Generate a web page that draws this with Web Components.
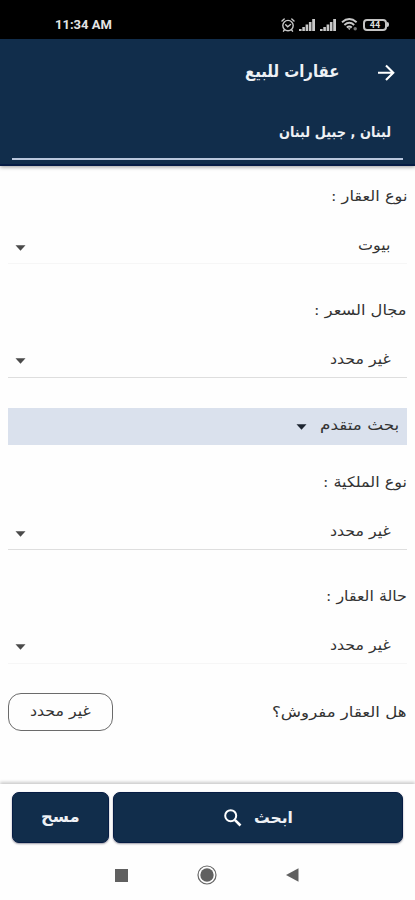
<!DOCTYPE html>
<html lang="ar" dir="rtl">
<head>
<meta charset="utf-8">
<meta name="viewport" content="width=device-width, initial-scale=1">
<title>عقارات للبيع</title>
<style>
  html, body {
    margin: 0;
    height: 100%;
    overflow: hidden;
    background: #fefefe;
    font-family: "DejaVu Sans", "Noto Sans", sans-serif;
  }
</style>
</head>
<body>
<search-screen></search-screen>

<script>
// Text set to a given width, whatever the metrics of the font
class FitText extends HTMLElement {
  constructor() {
    super();
    this.attachShadow({ mode: 'open' });
  }

  connectedCallback() {
    const width = Number(this.getAttribute('width'));
    this.shadowRoot.innerHTML = `
      <style>
        :host {
          display: block;
          flex: none;
          width: ${width}px;
          white-space: nowrap;
          line-height: 30px;
          height: 30px;
        }
        span {
          display: inline-block;
          transform-origin: right center;
        }
        :host([dir="ltr"]) span {
          transform-origin: left center;
        }
      </style>
      <span><slot></slot></span>
    `;
    const span = this.shadowRoot.querySelector('span');
    span.style.transform = `scaleX(${width / span.offsetWidth})`;
  }
}

class StatusBar extends HTMLElement {
  constructor() {
    super();
    this.attachShadow({ mode: 'open' });
  }

  connectedCallback() {
    const signal = `
      <svg width="17" height="12" viewBox="0 0 17 12" fill="#c8c8c8">
        <rect x="0" y="10" width="2.6" height="2"/>
        <rect x="3.3" y="8" width="2.6" height="4"/>
        <rect x="6.6" y="5.5" width="2.6" height="6.5"/>
        <rect x="9.9" y="3" width="2.6" height="9"/>
        <rect x="13.2" y="0" width="2.8" height="12"/>
      </svg>`;
    this.shadowRoot.innerHTML = `
      <style>
        :host {
          display: flex;
          direction: ltr;
          align-items: center;
          justify-content: space-between;
          height: 39px;
          padding: 10px 26px 0 55px;
          box-sizing: border-box;
          background: #000;
          color: #e4e4e4;
        }
        fit-text {
          font: bold 13px/30px Roboto, sans-serif;
        }
        .icons {
          display: flex;
          align-items: center;
          gap: 4px;
        }
        svg {
          display: block;
        }
        .battery {
          display: flex;
          align-items: center;
          margin-left: 1px;
        }
        .cell {
          width: 24px;
          height: 12px;
          box-sizing: border-box;
          border: 2px solid #c4c4c4;
          border-radius: 4px;
          color: #ddd;
          font: bold 9px/8px Roboto, sans-serif;
          text-align: center;
        }
        .tip {
          width: 2px;
          height: 5px;
          border-radius: 0 2px 2px 0;
          background: #ccc;
        }
      </style>
      <fit-text dir="ltr" width="57">11:34 AM</fit-text>
      <div class="icons">
        <svg width="14" height="14" viewBox="0 0 14 14" fill="none" stroke="#c8c8c8" stroke-width="1.4" stroke-linecap="round">
          <circle cx="7" cy="7.6" r="5.2"/>
          <path d="M1 3 3.2 1M13 3 10.8 1M4.7 6.8 6.7 8.8 9.5 6.5M3.3 12 2.5 13.2M10.7 12l.8 1.2"/>
        </svg>
        ${signal}
        ${signal}
        <svg width="17" height="13" viewBox="0 0 17 13" fill="none" stroke="#c8c8c8" stroke-width="1.9">
          <path d="M1 4.2Q8.3-2 15.6 4.2M3.4 6.9Q8.3 2.8 13.2 6.9M5.8 9.4Q8.3 7.4 10.8 9.4"/>
          <path d="M6.8 10.2 8.3 12l1.5-1.8z" fill="#c8c8c8" stroke="none"/>
          <circle cx="14.2" cy="10.8" r="1.7" fill="#777" stroke="none"/>
        </svg>
        <div class="battery"><div class="cell">44</div><div class="tip"></div></div>
      </div>
    `;
  }
}

class PageHeader extends HTMLElement {
  constructor() {
    super();
    this.attachShadow({ mode: 'open' });
  }

  connectedCallback() {
    this.shadowRoot.innerHTML = `
      <style>
        :host {
          display: block;
          height: 127px;
          box-sizing: border-box;
          background: #112d4b;
          border-bottom: 2px solid #061c44;
          box-shadow: 0 1px 4px rgba(0, 0, 0, 0.4);
          color: #eef1f5;
          font-weight: bold;
        }
        .bar {
          display: flex;
          align-items: center;
          gap: 38px;
          height: 66px;
          padding-right: 20px;
          font-size: 16.5px;
        }
        .place {
          display: flex;
          align-items: center;
          height: 55px;
          padding: 1px 12px 0 0;
          margin: 0 12px;
          box-sizing: border-box;
          border-bottom: 2px solid #b9c6dc;
          font-size: 14.5px;
        }
      </style>
      <div class="bar">
        <svg width="18" height="18" viewBox="0 0 18 18" fill="none" stroke="#fff" stroke-width="2.1">
          <path d="M1 9.8h15M9 2.5l7.3 7.3L9 17.1"/>
        </svg>
        <slot name="title"></slot>
      </div>
      <div class="place"><slot name="place"></slot></div>
    `;
  }
}

class SelectField extends HTMLElement {
  constructor() {
    super();
    this.attachShadow({ mode: 'open' });
  }

  connectedCallback() {
    this.shadowRoot.innerHTML = `
      <style>
        :host {
          display: block;
          height: 85.5px;
          color: #333;
          font-size: 14.5px;
        }
        .label {
          display: flex;
          align-items: center;
          height: 34px;
        }
        .value {
          display: flex;
          align-items: center;
          justify-content: space-between;
          height: 51px;
          padding: 14px 16px 0 7px;
          box-sizing: border-box;
          border-bottom: 1px solid var(--line, #dedede);
        }
        svg {
          margin-top: 5px;
        }
      </style>
      <div class="label"><slot name="label"></slot></div>
      <div class="value">
        <slot></slot>
        <svg width="11" height="6" viewBox="0 0 11 6"><path d="M.5.3h10L5.5 5.7z" fill="#4a4a4a"/></svg>
      </div>
    `;
  }
}

class NavyButton extends HTMLElement {
  constructor() {
    super();
    this.attachShadow({ mode: 'open' });
  }

  connectedCallback() {
    this.shadowRoot.innerHTML = `
      <style>
        :host {
          display: flex;
          align-items: center;
          justify-content: center;
          gap: 12px;
          height: 51px;
          box-sizing: border-box;
          border: 1px solid #061c44;
          border-radius: 7px;
          background: #112d4b;
          box-shadow: 0 1px 2px rgba(0, 0, 30, 0.4);
          color: #eef1f5;
          font-size: 16px;
          font-weight: bold;
        }
      </style>
      <slot></slot>
    `;
  }
}

class SystemNav extends HTMLElement {
  constructor() {
    super();
    this.attachShadow({ mode: 'open' });
  }

  connectedCallback() {
    this.shadowRoot.innerHTML = `
      <style>
        :host {
          display: flex;
          direction: ltr;
          align-items: center;
          justify-content: space-between;
          height: 50px;
          padding: 0 116px 0 115px;
        }
      </style>
      <svg width="13" height="13"><rect width="13" height="13" fill="#606060"/></svg>
      <svg width="20" height="20" viewBox="0 0 20 20">
        <circle cx="10" cy="10" r="9" fill="none" stroke="#666" stroke-width="1.2"/>
        <circle cx="10" cy="10" r="6.7" fill="#606060"/>
      </svg>
      <svg width="13" height="14"><path d="M0 7 12.5.3v13.4z" fill="#606060"/></svg>
    `;
  }
}

class SearchScreen extends HTMLElement {
  constructor() {
    super();
    this.attachShadow({ mode: 'open' });
  }

  connectedCallback() {
    this.shadowRoot.innerHTML = `
      <style>
        :host {
          display: flex;
          flex-direction: column;
          height: 900px;
        }
        main {
          flex: 1;
          padding: 13px 8px 0;
          color: #333;
          font-size: 14.5px;
        }
        select-field + select-field {
          margin-top: 28px;
        }
        .faint {
          --line: #f6f6f6;
        }
        .advanced {
          display: flex;
          align-items: center;
          gap: 13px;
          height: 37px;
          margin: 30px 0 20px;
          padding: 0 8px 4px 0;
          box-sizing: border-box;
          background: #dae1ed;
        }
        .advanced svg {
          margin-top: 4px;
        }
        .furnished {
          display: flex;
          align-items: center;
          justify-content: space-between;
          margin-top: 29px;
        }
        .chip {
          display: flex;
          justify-content: center;
          width: 105px;
          height: 38px;
          padding-top: 2px;
          box-sizing: border-box;
          border: 1px solid #6b6b6b;
          border-radius: 13px;
        }
        footer {
          display: flex;
          gap: 4px;
          height: 66px;
          padding: 8px 12px 0;
          box-sizing: border-box;
          background: #fefefe;
          box-shadow: 0 -1px 4px rgba(0, 0, 0, 0.28);
          clip-path: inset(-8px 0 0 0);
        }
        system-nav {
          position: relative;
          background: #fefefe;
        }
        footer {
          position: relative;
          z-index: 1;
          box-shadow: 0 -2px 3px rgba(0, 0, 0, 0.2);
        }
        .search {
          flex: 1;
          padding-right: 0;
          padding-left: 1px;
        }
        .clear {
          width: 97px;
        }
        .clear fit-text {
          margin-bottom: 2px;
        }
      </style>
      <status-bar></status-bar>
      <page-header>
        <fit-text slot="title" width="95">عقارات للبيع</fit-text>
        <fit-text slot="place" width="112">لبنان , جبيل لبنان</fit-text>
      </page-header>
      <main>
        <select-field class="faint">
          <fit-text slot="label" width="76">نوع العقار :</fit-text>
          <fit-text width="33">بيوت</fit-text>
        </select-field>
        <select-field>
          <fit-text slot="label" width="93">مجال السعر :</fit-text>
          <fit-text width="61">غير محدد</fit-text>
        </select-field>
        <div class="advanced">
          <fit-text width="79">بحث متقدم</fit-text>
          <svg width="11" height="6" viewBox="0 0 11 6"><path d="M.5.3h10L5.5 5.7z" fill="#1d2430"/></svg>
        </div>
        <select-field>
          <fit-text slot="label" width="84">نوع الملكية :</fit-text>
          <fit-text width="61">غير محدد</fit-text>
        </select-field>
        <select-field class="faint">
          <fit-text slot="label" width="81">حالة العقار :</fit-text>
          <fit-text width="61">غير محدد</fit-text>
        </select-field>
        <div class="furnished">
          <fit-text width="135">هل العقار مفروش؟</fit-text>
          <div class="chip"><fit-text width="61">غير محدد</fit-text></div>
        </div>
      </main>
      <footer>
        <navy-button class="search">
          <fit-text width="39">ابحث</fit-text>
          <svg width="18" height="18" viewBox="0 0 18 18" fill="none" stroke="#fff">
            <circle cx="6.7" cy="6.7" r="5.5" stroke-width="2"/>
            <path d="M10.8 10.8 16.5 16.5" stroke-width="2.6"/>
          </svg>
        </navy-button>
        <navy-button class="clear"><fit-text width="39">مسح</fit-text></navy-button>
      </footer>
      <system-nav></system-nav>
    `;
  }
}

customElements.define('fit-text', FitText);
customElements.define('status-bar', StatusBar);
customElements.define('page-header', PageHeader);
customElements.define('select-field', SelectField);
customElements.define('navy-button', NavyButton);
customElements.define('system-nav', SystemNav);
customElements.define('search-screen', SearchScreen);
</script>
</body>
</html>
